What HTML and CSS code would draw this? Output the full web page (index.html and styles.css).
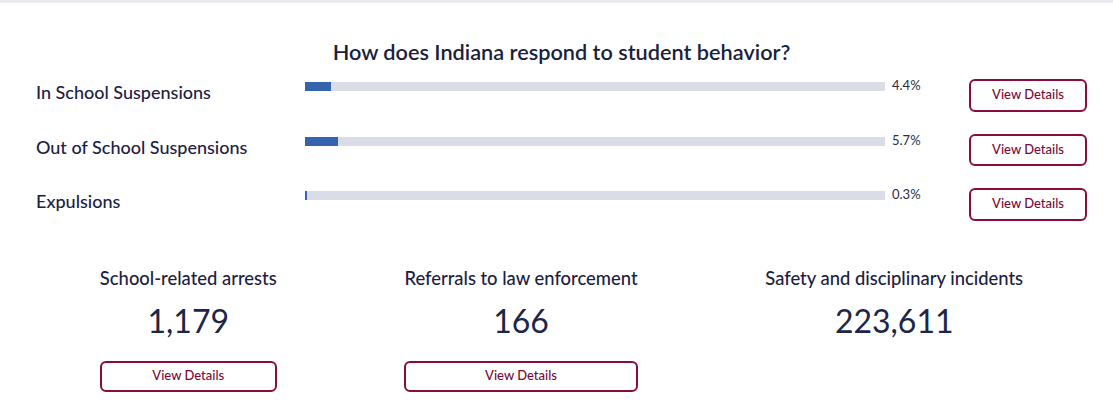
FILE: index.html
```html
<!DOCTYPE html>
<html lang="en">
<head>
<meta charset="utf-8">
<title>How does Indiana respond to student behavior?</title>
<link rel="stylesheet" href="styles.css">
</head>
<body>
<div class="topbar"></div>
<main class="content">
  <h2 class="title">How does Indiana respond to student behavior?</h2>
  <div class="rows">
    <div class="row">
      <div class="label">In School Suspensions</div>
      <div class="track"><div class="fill" style="width:4.4%"></div></div>
      <div class="pct">4.4%</div>
      <button class="btn btn-row">View Details</button>
    </div>
    <div class="row">
      <div class="label">Out of School Suspensions</div>
      <div class="track"><div class="fill" style="width:5.7%"></div></div>
      <div class="pct">5.7%</div>
      <button class="btn btn-row">View Details</button>
    </div>
    <div class="row">
      <div class="label">Expulsions</div>
      <div class="track"><div class="fill" style="width:0.3%"></div></div>
      <div class="pct">0.3%</div>
      <button class="btn btn-row">View Details</button>
    </div>
  </div>
  <div class="stats">
    <div class="stat">
      <div class="stat-title">School-related arrests</div>
      <div class="stat-num">1,179</div>
      <button class="btn btn-stat">View Details</button>
    </div>
    <div class="stat">
      <div class="stat-title">Referrals to law enforcement</div>
      <div class="stat-num">166</div>
      <button class="btn btn-stat">View Details</button>
    </div>
    <div class="stat">
      <div class="stat-title">Safety and disciplinary incidents</div>
      <div class="stat-num">223,611</div>
    </div>
  </div>
</main>
</body>
</html>
```
FILE: styles.css
```css
* { box-sizing: border-box; }
html, body { margin: 0; padding: 0; background: #ffffff; }
body {
  font-family: Lato, "Open Sans", "Liberation Sans", sans-serif;
  color: #1c2142;
  width: 1113px;
  height: 401px;
  overflow: hidden;
}
.topbar { height: 3px; background: #e9eaf0; }
.content { padding: 0 26px 0 36px; }
.title {
  margin: 35px 0 0;
  font-size: 21.7px;
  line-height: 28px;
  font-weight: 600;
  text-align: center;
  color: #1b1f3d;
}
.rows { margin-top: 13px; }
.row {
  display: grid;
  grid-template-columns: 269px 580px 1fr 118px;
  align-items: start;
  height: 54.5px;
}
.label {
  margin-top: 2px;
  font-size: 18px;
  line-height: 22px;
  font-weight: 500;
  white-space: nowrap;
}
.track {
  margin-top: 3px;
  height: 9px;
  background: #dadde5;
}
.fill { height: 100%; background: #3563ad; }
.pct {
  margin-top: -2px;
  padding-left: 7px;
  font-size: 13px;
  line-height: 16px;
  color: #2a2e45;
}
.btn {
  display: block;
  border: 2px solid #8a0b3e;
  border-radius: 6px;
  background: #ffffff;
  color: #7a0a38;
  font-family: Lato, "Open Sans", "Liberation Sans", sans-serif;
  font-size: 13px;
  line-height: 16px;
  font-weight: 500;
  padding: 0 0 2px;
  cursor: pointer;
}
.btn-row { width: 118px; height: 32.5px; }
.stats {
  display: flex;
  justify-content: space-around;
  margin-top: 24px;
}
.stat { display: flex; flex-direction: column; align-items: stretch; text-align: center; }
.stat-title {
  font-size: 18.4px;
  line-height: 22px;
  font-weight: 500;
  white-space: nowrap;
}
.stat-num {
  margin-top: 12px;
  font-size: 32px;
  line-height: 40px;
  font-weight: 400;
  color: #1d2548;
}
.btn-stat { margin-top: 20px; width: 100%; height: 31.5px; }
```
